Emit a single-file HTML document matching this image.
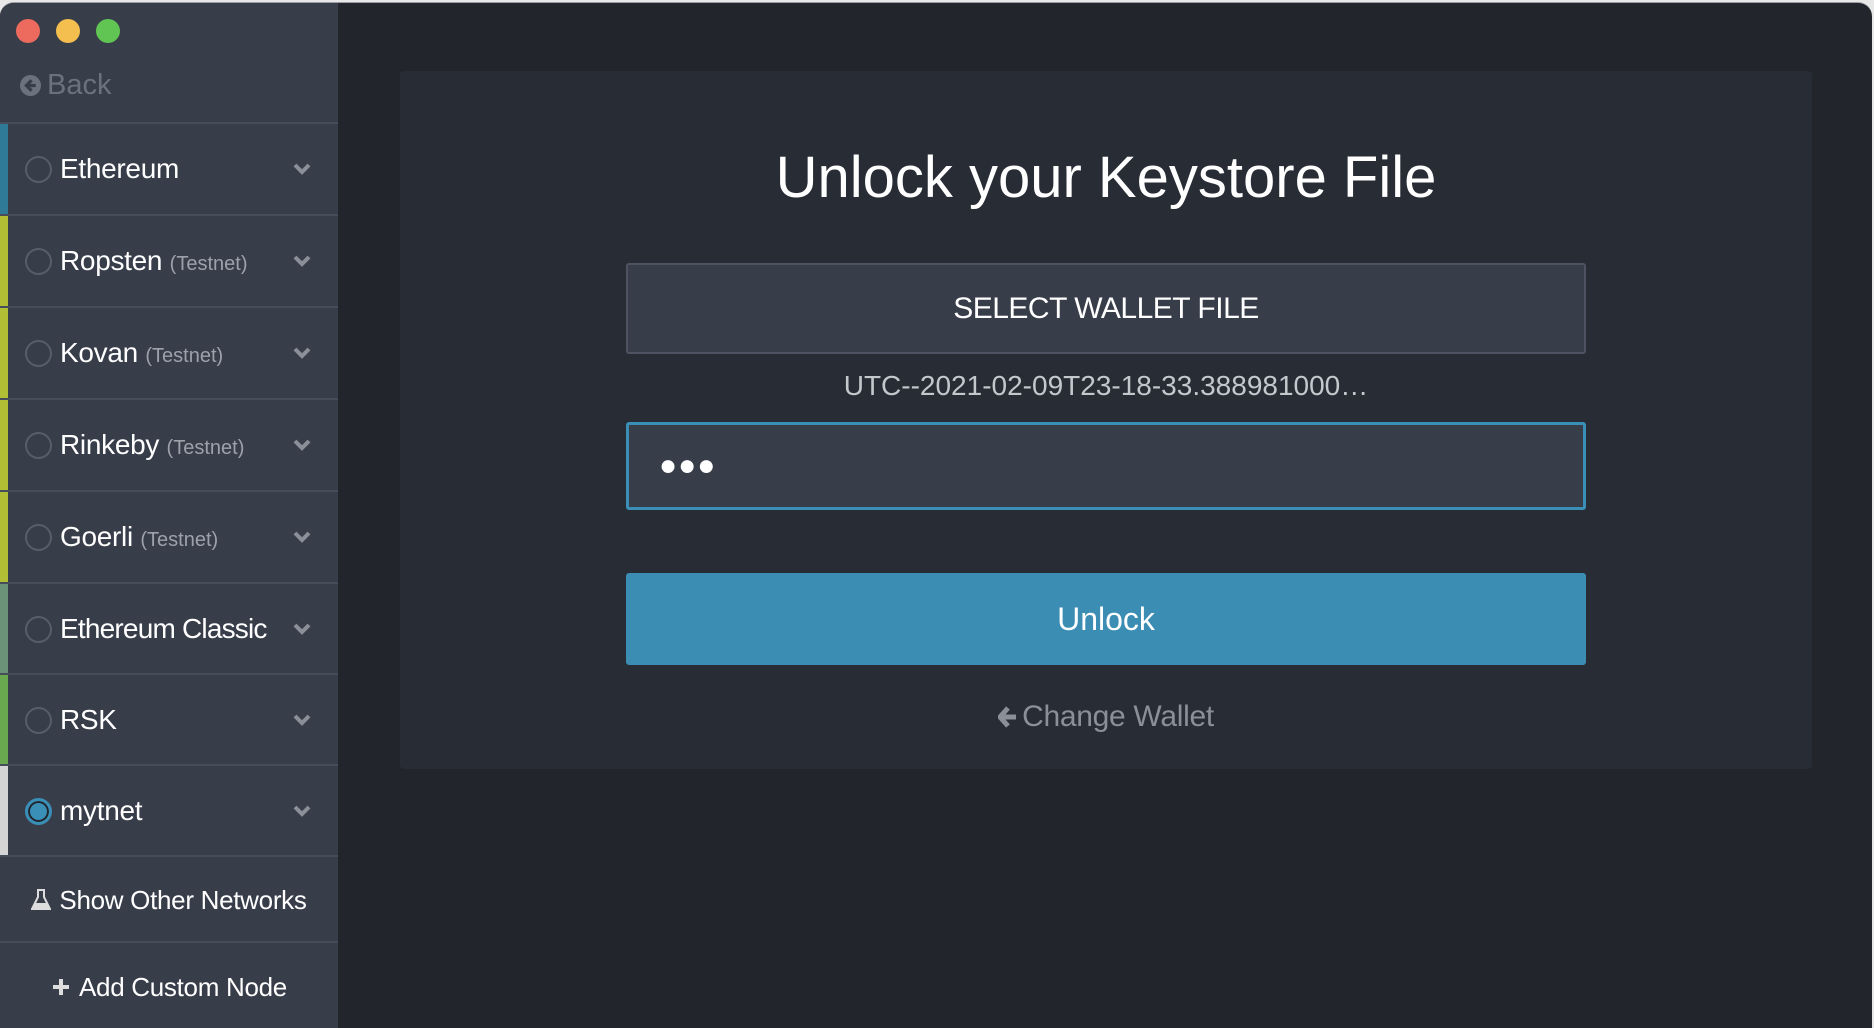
<!DOCTYPE html>
<html><head><meta charset="utf-8"><style>
*{box-sizing:border-box;margin:0;padding:0}
body{width:1874px;height:1028px;background:#e8e8e8;font-family:"Liberation Sans",sans-serif;position:relative;overflow:hidden}
.win{position:absolute;left:0;top:2px;width:1872px;height:1026px;background:#22252c;border-radius:14px 14px 0 0;overflow:hidden;border-top:1px solid #9a9da3}
.side{position:absolute;left:0;top:0;width:338px;height:1026px;background:#383d4a}
.tl{position:absolute;top:16px;width:24px;height:24px;border-radius:50%}
.back{position:absolute;left:20px;top:66px;font-size:29px;color:#6b717d;display:flex;align-items:center;gap:6px}
.row{position:absolute;left:0;width:338px;height:92px;border-top:2px solid #464c59;display:flex;align-items:center}
.strip{position:absolute;left:0;top:0;bottom:0;width:8px}
.radio{position:absolute;left:25px;width:27px;height:27px;border-radius:50%;border:2px solid #575d69}
.name{position:absolute;left:60px;font-size:28px;color:#fff;letter-spacing:-0.3px}
.name small{font-size:20px;color:#9ca1aa;letter-spacing:0}
.chev{position:absolute;left:292px}
.card{position:absolute;left:400px;top:68px;width:1412px;height:698px;background:#282c35;border-radius:4px}
.c{position:absolute;left:0;width:100%;text-align:center}
</style></head><body>
<div class="win">
<div class="side">
<div class="tl" style="left:16px;background:#ed6a5e"></div>
<div class="tl" style="left:56px;background:#f5bf4f"></div>
<div class="tl" style="left:96px;background:#61c554"></div>
<div class="back"><svg width="21" height="21" viewBox="0 0 20 20"><circle cx="10" cy="10" r="10" fill="#6b717d"/><path d="M11 5 L6 10 L11 15 M6 10 H15" stroke="#383d4a" stroke-width="3" fill="none"/></svg>Back</div>

<div class="row" style="top:119px"><div class="strip" style="background:#2f7b97"></div><div class="radio"></div><div class="name">Ethereum</div><svg class="chev" width="20" height="14" viewBox="0 0 20 14"><path d="M3 3 L10 10 L17 3" stroke="#8a8f98" stroke-width="4" fill="none"/></svg></div>
<div class="row" style="top:211px"><div class="strip" style="background:#b2bf34"></div><div class="radio"></div><div class="name">Ropsten <small>(Testnet)</small></div><svg class="chev" width="20" height="14" viewBox="0 0 20 14"><path d="M3 3 L10 10 L17 3" stroke="#8a8f98" stroke-width="4" fill="none"/></svg></div>
<div class="row" style="top:303px"><div class="strip" style="background:#b2bf34"></div><div class="radio"></div><div class="name">Kovan <small>(Testnet)</small></div><svg class="chev" width="20" height="14" viewBox="0 0 20 14"><path d="M3 3 L10 10 L17 3" stroke="#8a8f98" stroke-width="4" fill="none"/></svg></div>
<div class="row" style="top:395px"><div class="strip" style="background:#b2bf34"></div><div class="radio"></div><div class="name">Rinkeby <small>(Testnet)</small></div><svg class="chev" width="20" height="14" viewBox="0 0 20 14"><path d="M3 3 L10 10 L17 3" stroke="#8a8f98" stroke-width="4" fill="none"/></svg></div>
<div class="row" style="top:487px"><div class="strip" style="background:#b2bf34"></div><div class="radio"></div><div class="name">Goerli <small>(Testnet)</small></div><svg class="chev" width="20" height="14" viewBox="0 0 20 14"><path d="M3 3 L10 10 L17 3" stroke="#8a8f98" stroke-width="4" fill="none"/></svg></div>
<div class="row" style="top:579px"><div class="strip" style="background:#6b9378"></div><div class="radio"></div><div class="name" style="letter-spacing:-0.8px">Ethereum Classic</div><svg class="chev" width="20" height="14" viewBox="0 0 20 14"><path d="M3 3 L10 10 L17 3" stroke="#8a8f98" stroke-width="4" fill="none"/></svg></div>
<div class="row" style="top:670px"><div class="strip" style="background:#6aa84f"></div><div class="radio"></div><div class="name">RSK</div><svg class="chev" width="20" height="14" viewBox="0 0 20 14"><path d="M3 3 L10 10 L17 3" stroke="#8a8f98" stroke-width="4" fill="none"/></svg></div>
<div class="row" style="top:761px"><div class="strip" style="background:#d4d4d4"></div><div class="radio" style="border:3px solid #3a8fb7;background:#3a8fb7;box-shadow:inset 0 0 0 2px #22252c"></div><div class="name">mytnet</div><svg class="chev" width="20" height="14" viewBox="0 0 20 14"><path d="M3 3 L10 10 L17 3" stroke="#8a8f98" stroke-width="4" fill="none"/></svg></div>
<div class="row" style="top:852px;height:88px;justify-content:center"><span style="font-size:26px;color:#fff;display:flex;align-items:center;gap:8px;letter-spacing:-0.3px"><svg width="20" height="22" viewBox="0 0 20 22"><path d="M6 1 H14 M7 1 V8 L1 20 H19 L13 8 V1" stroke="#ddd" stroke-width="2" fill="none"/><path d="M4 14 H16 L19 20 H1 Z" fill="#ddd"/></svg>Show Other Networks</span></div>
<div class="row" style="top:938px;height:90px;justify-content:center"><span style="font-size:26px;color:#fff;display:flex;align-items:center;gap:8px;letter-spacing:-0.3px"><svg width="20" height="20" viewBox="0 0 20 20"><path d="M10 2 V18 M2 10 H18" stroke="#ddd" stroke-width="4"/></svg>Add Custom Node</span></div>
</div>

<div class="card">
<div class="c" style="top:73px;font-size:58px;color:#fff">Unlock your Keystore File</div>
<div style="position:absolute;left:226px;top:192px;width:960px;height:91px;background:#383d4a;border:2px solid #4d5361;border-radius:3px;color:#fff;font-size:30px;display:flex;align-items:center;justify-content:center;letter-spacing:-0.5px">SELECT WALLET FILE</div>
<div class="c" style="top:299px;font-size:28px;color:#c4c7cc;font-weight:300">UTC--2021-02-09T23-18-33.388981000…</div>
<div style="position:absolute;left:226px;top:351px;width:960px;height:88px;background:#383d4a;border:3px solid #3a8fb7;border-radius:3px;color:#fff;font-size:30px;padding-left:30px;display:flex;align-items:center;letter-spacing:1px">●●●</div>
<div style="position:absolute;left:226px;top:502px;width:960px;height:92px;background:#3b8db3;border-radius:3px;color:#fff;font-size:32px;display:flex;align-items:center;justify-content:center">Unlock</div>
<div class="c" style="top:629px;font-size:30px;color:#8a8f98;display:flex;justify-content:center;align-items:center;gap:4px;letter-spacing:-0.3px"><svg width="20" height="22" viewBox="0 0 20 22"><path d="M10 2 L2 11 L10 20 M3 11 H18" stroke="#8a8f98" stroke-width="5" fill="none"/></svg>Change Wallet</div>
</div>
</div>
</body></html>
